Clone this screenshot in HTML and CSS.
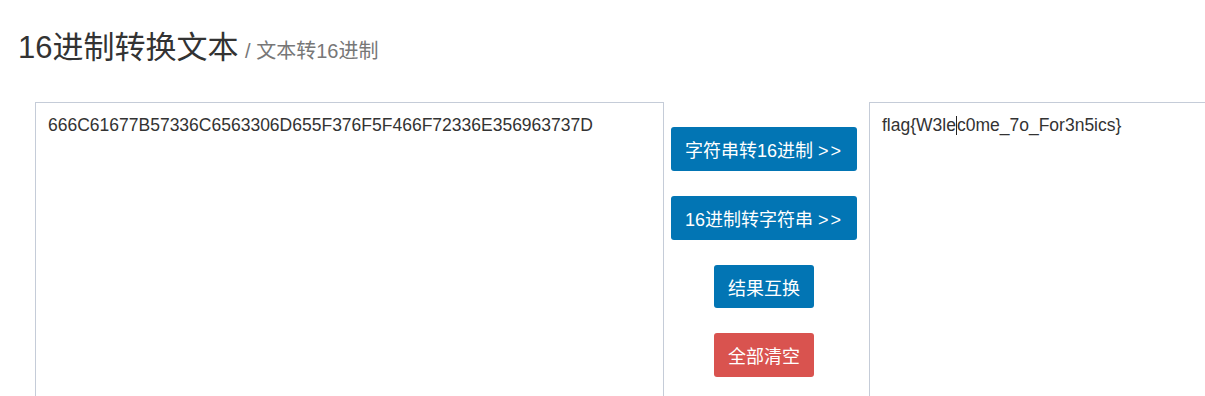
FILE: index.html
```html
<!DOCTYPE html>
<html lang="zh">
<head>
<meta charset="utf-8">
<title>16进制转换文本</title>
<link rel="stylesheet" href="styles.css">
</head>
<body>
<div class="page">
  <h1 class="title">16进制转换文本 <small class="sub">/ 文本转16进制</small></h1>
  <div class="tool">
    <div class="box">666C61677B57336C6563306D655F376F5F466F72336E356963737D</div>
    <div class="actions">
      <button class="btn btn-blue btn-wide">字符串转16进制 <span class="arrows">&gt;&gt;</span></button>
      <button class="btn btn-blue btn-wide">16进制转字符串 <span class="arrows">&gt;&gt;</span></button>
      <button class="btn btn-blue btn-small">结果互换</button>
      <button class="btn btn-red btn-small">全部清空</button>
    </div>
    <div class="box">flag{W3le<span class="caret"></span>c0me_7o_For3n5ics}</div>
  </div>
</div>
</body>
</html>
```
FILE: styles.css
```css
html, body {
  margin: 0;
  padding: 0;
  background: #fff;
  overflow: hidden;
}
body {
  font-family: "Liberation Sans", Arial, "Noto Sans CJK SC", sans-serif;
  color: #333;
  width: 1205px;
  height: 396px;
}
.page {
  padding: 0 0 0 18px;
}
.title {
  margin: 0;
  padding-top: 28px;
  font-size: 31px;
  font-weight: normal;
  line-height: 40px;
  color: #333;
  white-space: nowrap;
}
.sub {
  font-size: 20px;
  color: #777;
  margin-left: -2px;
}
.tool {
  display: flex;
  align-items: flex-start;
  margin-top: 31px;
  margin-left: 17px;
  width: 1800px;
}
.box {
  box-sizing: border-box;
  width: 629px;
  height: 330px;
  flex: none;
  border: 1px solid #c5ccd8;
  padding: 12px 12px;
  font-size: 17.5px;
  line-height: 20px;
  color: #333;
  white-space: nowrap;
}
.caret {
  display: inline-block;
  width: 1px;
  height: 19px;
  background: #222;
  vertical-align: -4px;
}
.actions {
  flex: none;
  width: 186px;
  margin: 0 12px 0 7px;
  padding-top: 25px;
  display: flex;
  flex-direction: column;
  align-items: center;
  gap: 25px;
}
.btn {
  border: none;
  border-radius: 3px;
  color: #fff;
  font-family: "Liberation Sans", Arial, "Noto Sans CJK SC", sans-serif;
  font-size: 18px;
  height: 44px;
  padding: 0;
  cursor: pointer;
}
.arrows {
  letter-spacing: 2px;
}
.btn-blue {
  background: #0275b4;
}
.btn-red {
  background: #d9534f;
}
.btn-wide {
  width: 186px;
}
.btn-small {
  width: 100px;
}
.btn-small.btn-blue {
  height: 43px;
}
```
